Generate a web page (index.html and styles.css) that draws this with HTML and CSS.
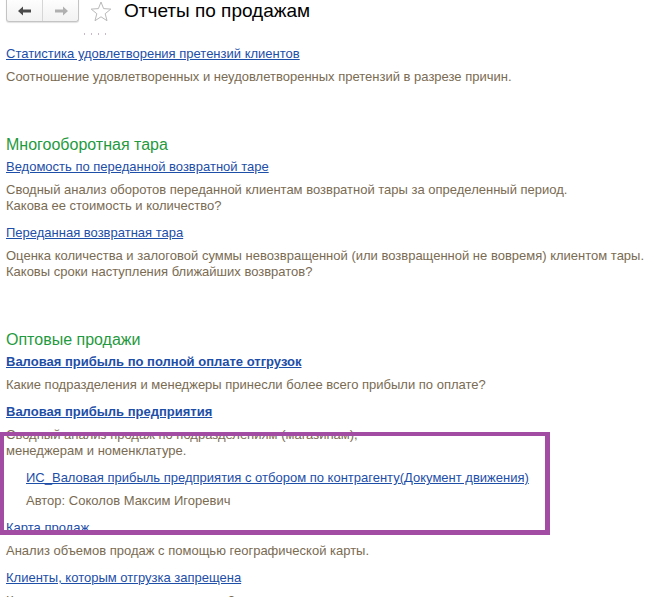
FILE: index.html
```html
<!DOCTYPE html>
<html lang="ru">
<head>
<meta charset="utf-8">
<title>Отчеты по продажам</title>
<link rel="stylesheet" href="styles.css">
</head>
<body>
<div class="page">
<div class="toolbar">
  <div class="nav">
    <span class="nav-btn">
      <svg width="16" height="12" viewBox="0 0 16 12"><path d="M1 6 L6 1.5 L6 4.5 L14 4.5 L14 7.5 L6 7.5 L6 10.5 Z" fill="#4a4a4a"/></svg>
    </span>
    <span class="nav-btn">
      <svg width="16" height="12" viewBox="0 0 16 12"><path d="M15 6 L10 1.5 L10 4.5 L2 4.5 L2 7.5 L10 7.5 L10 10.5 Z" fill="#b0b0b0"/></svg>
    </span>
  </div>
  <svg class="star" width="22" height="21" viewBox="0 0 22 21"><path d="M11 1 L13.6 7.6 L20.8 8.1 L15.2 12.7 L17 19.7 L11 15.8 L5 19.7 L6.8 12.7 L1.2 8.1 L8.4 7.6 Z" fill="none" stroke="#b9b9b9" stroke-width="1"/></svg>
  <h1 class="title">Отчеты по продажам</h1>
</div>
<div class="dots"><span></span><span></span><span></span><span></span></div>

<div class="content">
  <div class="item">
    <a class="link" href="#">Статистика удовлетворения претензий клиентов</a>
    <p class="desc">Соотношение удовлетворенных и неудовлетворенных претензий в разрезе причин.</p>
  </div>

  <h2 class="group">Многооборотная тара</h2>
  <div class="item">
    <a class="link" href="#">Ведомость по переданной возвратной таре</a>
    <p class="desc">Сводный анализ оборотов переданной клиентам возвратной тары за определенный период.<br>Какова ее стоимость и количество?</p>
  </div>
  <div class="item">
    <a class="link" href="#">Переданная возвратная тара</a>
    <p class="desc">Оценка количества и залоговой суммы невозвращенной (или возвращенной не вовремя) клиентом тары.<br>Каковы сроки наступления ближайших возвратов?</p>
  </div>

  <h2 class="group">Оптовые продажи</h2>
  <div class="item">
    <a class="link bold" href="#">Валовая прибыль по полной оплате отгрузок</a>
    <p class="desc">Какие подразделения и менеджеры принесли более всего прибыли по оплате?</p>
  </div>
  <div class="item">
    <a class="link bold" href="#">Валовая прибыль предприятия</a>
    <p class="desc">Сводный анализ продаж по подразделениям (магазинам),<br>менеджерам и номенклатуре.</p>
  </div>
  <div class="item sub">
    <a class="link" href="#">ИС_Валовая прибыль предприятия с отбором по контрагенту(Документ движения)</a>
    <p class="desc">Автор: Соколов Максим Игоревич</p>
  </div>
  <div class="item">
    <a class="link" href="#">Карта продаж</a>
    <p class="desc">Анализ объемов продаж с помощью географической карты.</p>
  </div>
  <div class="item">
    <a class="link" href="#">Клиенты, которым отгрузка запрещена</a>
    <p class="desc">Каким клиентам запрещена отгрузка?</p>
  </div>
</div>

<div class="highlight"></div>
</div>
</body>
</html>
```

FILE: styles.css
```css
html, body {
  margin: 0;
  padding: 0;
  background: #ffffff;
  overflow: hidden;
}
body {
  font-family: "Liberation Sans", Arial, sans-serif;
  font-size: 13px;
}
.page {
  position: relative;
  height: 597px;
  overflow: hidden;
}
.toolbar {
  display: flex;
  align-items: center;
  height: 22px;
  padding-left: 6px;
}
.nav {
  display: flex;
  height: 24px;
  margin-top: -4px;
  border: 1px solid #c4c4c4;
  border-top: none;
  border-radius: 0 0 3px 3px;
  background: linear-gradient(#ffffff, #f2f2f2);
  box-shadow: 0 1px 1px rgba(0,0,0,0.12);
}
.nav-btn {
  width: 35px;
  display: flex;
  align-items: center;
  justify-content: center;
  padding-top: 4px;
}
.nav-btn + .nav-btn {
  border-left: 1px solid #d6d6d6;
}
.star {
  margin-left: 11px;
  margin-top: 1px;
}
.title {
  margin: 0 0 0 12px;
  font-weight: normal;
  font-size: 19px;
  color: #000;
  line-height: 22px;
}
.dots {
  display: flex;
  gap: 6px;
  padding-left: 84px;
  height: 24px;
  align-items: center;
}
.dots span {
  width: 1px;
  height: 2px;
  background: #c8b8c8;
}
.content {
  padding-left: 6px;
}
.item {
  margin-bottom: 11px;
}
.link {
  display: block;
  color: #1d4ea8;
  text-decoration: underline;
  line-height: 16px;
  margin-bottom: 7px;
  width: max-content;
}
.link.bold {
  font-weight: bold;
}
.desc {
  margin: 0;
  color: #7a6b52;
  line-height: 16px;
}
.group {
  margin: 51px 0 5px 0;
  font-weight: normal;
  font-size: 16px;
  line-height: 18px;
  color: #1f9a40;
}
.sub {
  padding-left: 20px;
}
.highlight {
  position: absolute;
  left: 0;
  top: 432px;
  width: 541px;
  height: 94px;
  border: 4px solid #a24ca3;
  border-right-width: 5px;
  border-bottom-width: 5px;
  pointer-events: none;
}
```
